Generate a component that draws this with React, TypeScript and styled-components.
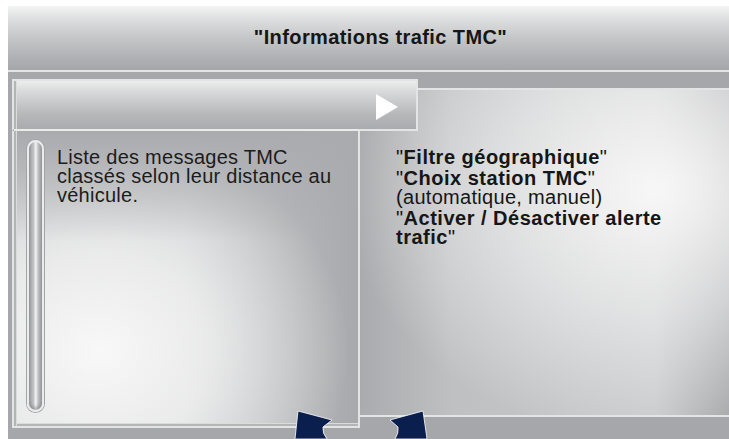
import React from 'react';
import styled, { createGlobalStyle } from 'styled-components';

const GlobalStyle = createGlobalStyle`
    html,
    body {
        margin: 0;
        padding: 0;
        background: #ffffff;
    }
    body {
        font-family: 'Liberation Sans', Arial, sans-serif;
    }
`;

const frame = '#e3e4e4';

const Page = styled.div`
    width: 729px;
    height: 439px;
    padding: 6px 0 0 8px;
    box-sizing: border-box;
    overflow: hidden;
`;

const Screen = styled.div`
    position: relative;
    width: 721px;
    height: 433px;
    background: #a6a7aa;
    overflow: hidden;
    display: flex;
    flex-direction: column;
`;

const Header = styled.header`
    flex: none;
    height: 66px;
    box-sizing: border-box;
    display: flex;
    align-items: center;
    justify-content: center;
    padding: 0 0 2px 24px;
    border-bottom: 2px solid ${frame};
    background: linear-gradient(
        to bottom,
        #f4f4f4 0%,
        #dfe0e0 18%,
        #c5c6c8 50%,
        #adaeb1 85%,
        #a6a7aa 100%
    );
`;

const Title = styled.h1`
    margin: 0;
    font-size: 20px;
    font-weight: 700;
    color: #161616;
    letter-spacing: 0.4px;
`;

const Workspace = styled.main`
    display: flex;
    align-items: flex-start;
    padding: 7px 0 0 4px;
`;

const LeftColumn = styled.section`
    flex: none;
    width: 348px;
    height: 349px;
    display: flex;
    flex-direction: column;
    position: relative;
    z-index: 1;
`;

const TabHeader = styled.div`
    position: relative;
    flex: none;
    width: 406px;
    height: 52px;
    box-sizing: border-box;
    display: flex;
    justify-content: flex-end;
    border: 2px solid ${frame};
    border-bottom-color: transparent;
    box-shadow: inset 2px 0 0 #b4b5b7, inset 3px 0 0 #dadbdb;
    background: linear-gradient(
        to bottom,
        #ebecec 0%,
        #d6d7d8 25%,
        #b6b7b9 70%,
        #aaabae 100%
    );

    &::after {
        content: '';
        position: absolute;
        left: 344px;
        right: -2px;
        bottom: -2px;
        height: 2px;
        background: ${frame};
    }
`;

const Ear = styled.div`
    width: 58px;
    display: flex;
    align-items: center;
    justify-content: center;
    padding-top: 4px;
`;

const PanelBody = styled.div`
    flex: 1;
    display: flex;
    gap: 13px;
    padding: 9px 10px 14px 13px;
    border: 2px solid ${frame};
    border-top: none;
    box-shadow: inset 2px 0 0 #b4b5b7, inset 3px 0 0 #dadbdb,
        inset 0 -2px 0 #b4b5b7, inset 0 -3px 0 #dadbdb;
    background: linear-gradient(
            to bottom,
            rgba(170, 171, 174, 1) 0px,
            rgba(170, 171, 174, 0) 110px
        ),
        radial-gradient(
            ellipse 250px 220px at 85px 220px,
            rgba(248, 248, 248, 1) 0%,
            rgba(248, 248, 248, 0.7) 45%,
            rgba(248, 248, 248, 0) 100%
        ),
        linear-gradient(to right, #c8c9cb 0%, #c9cacc 50%, #a8a9ac 100%);
`;

const ScrollTrack = styled.div`
    flex: none;
    width: 13px;
    border: 2px solid #ececec;
    border-radius: 9px;
    box-shadow: 0 0 0 1px #a3a4a7, inset 0 -3px 3px rgba(120, 121, 124, 0.5);
    background: linear-gradient(
        to right,
        #9c9da0 0%,
        #c2c3c5 35%,
        #f4f4f4 52%,
        #bcbdbf 72%,
        #9b9c9f 100%
    );
`;

const Message = styled.p`
    margin: 0;
    padding-top: 8px;
    max-width: 285px;
    font-size: 20px;
    line-height: 19px;
    letter-spacing: 0.25px;
    color: #1c1c1c;
`;

const RightPanel = styled.section`
    flex: 1;
    height: 329px;
    margin: 9px 0 0 -2px;
    box-sizing: border-box;
    padding: 58px 20px 0 36px;
    border: 2px solid ${frame};
    border-right: none;
    background: radial-gradient(
            ellipse 310px 250px at 295px 100px,
            rgba(247, 247, 247, 1) 0%,
            rgba(247, 247, 247, 0.55) 50%,
            rgba(247, 247, 247, 0) 100%
        ),
        linear-gradient(to right, #aaabae 0%, #bfc0c2 25%, #c8c9cb 80%, #a4a5a8 100%);
`;

const MenuList = styled.ul`
    list-style: none;
    margin: 0;
    padding: 0;
    max-width: 295px;
    color: #161616;
`;

const MenuItem = styled.li`
    font-size: 20px;
    line-height: 19px;
    letter-spacing: 0.5px;
    margin-bottom: 2px;
`;

const Label = styled.strong`
    font-weight: 700;
`;

const Quote = styled.span`
    font-weight: 400;
`;

const Hint = styled.span`
    display: block;
    font-weight: 400;
    letter-spacing: 0.3px;
`;

const Arrows = styled.svg`
    position: absolute;
    z-index: 2;
    left: 282px;
    top: 399px;
`;

const items = [
    { id: 1, label: 'Filtre géographique' },
    { id: 2, label: 'Choix station TMC', hint: '(automatique, manuel)' },
    { id: 3, label: 'Activer / Désactiver alerte trafic' },
];

const App = () => {
    return (
        <Page>
            <GlobalStyle />
            <Screen>
                <Header>
                    <Title>"Informations trafic TMC"</Title>
                </Header>
                <Workspace>
                    <LeftColumn>
                        <TabHeader>
                            <Ear>
                                <svg width='22' height='26' viewBox='0 0 22 26'>
                                    <polygon points='0,0 22,13 0,26' fill='#ffffff' />
                                </svg>
                            </Ear>
                        </TabHeader>
                        <PanelBody>
                            <ScrollTrack />
                            <Message>
                                Liste des messages TMC classés selon leur
                                distance au véhicule.
                            </Message>
                        </PanelBody>
                    </LeftColumn>
                    <RightPanel>
                        <MenuList>
                            {items.map((item) => (
                                <MenuItem key={item.id}>
                                    <Quote>"</Quote>
                                    <Label>{item.label}</Label>
                                    <Quote>"</Quote>
                                    {item.hint && <Hint>{item.hint}</Hint>}
                                </MenuItem>
                            ))}
                        </MenuList>
                    </RightPanel>
                </Workspace>
                <Arrows width='140' height='34' viewBox='290 405 140 34'>
                    <path
                        d='M298,411 L332,420 L323,427 Q322,433 327,439 L295,439 Z'
                        fill='#0b1f4e'
                        stroke='#ffffff'
                        strokeWidth='0.8'
                    />
                    <path
                        d='M423,411 L390,420 L398,427 Q399,433 395,439 L427,439 Z'
                        fill='#0b1f4e'
                        stroke='#ffffff'
                        strokeWidth='0.8'
                    />
                </Arrows>
            </Screen>
        </Page>
    );
};

export default App;
